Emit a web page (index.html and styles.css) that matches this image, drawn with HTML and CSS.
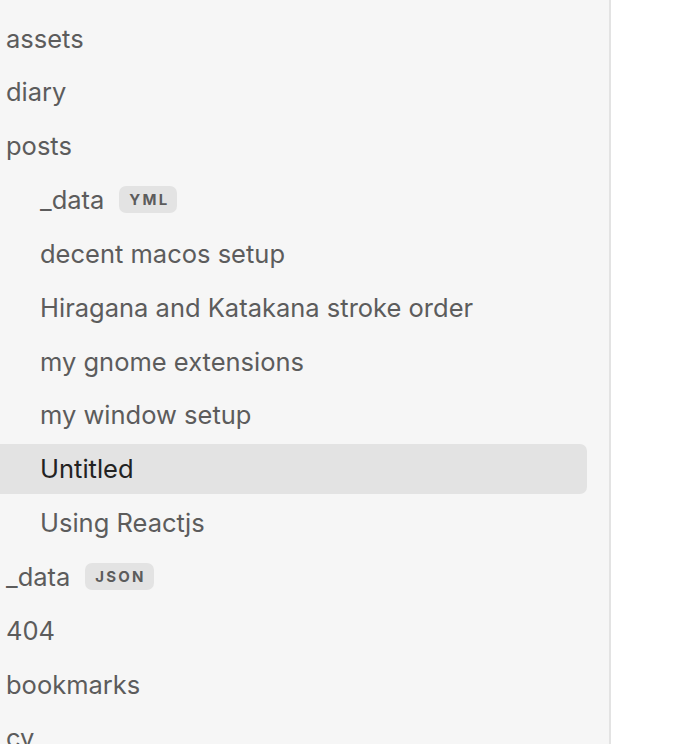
FILE: index.html
```html
<!DOCTYPE html>
<html lang="en">
<head>
<meta charset="utf-8">
<title>Files</title>
<link rel="stylesheet" href="styles.css">
</head>
<body>
<div class="app">
  <nav class="sidebar">
    <div class="tree">
      <div class="row">assets</div>
      <div class="row">diary</div>
      <div class="row">posts</div>
      <div class="row nested">_data <span class="badge">YML</span></div>
      <div class="row nested">decent macos setup</div>
      <div class="row nested">Hiragana and Katakana stroke order</div>
      <div class="row nested">my gnome extensions</div>
      <div class="row nested">my window setup</div>
      <div class="row nested active">Untitled</div>
      <div class="row nested">Using Reactjs</div>
      <div class="row">_data <span class="badge">JSON</span></div>
      <div class="row">404</div>
      <div class="row">bookmarks</div>
      <div class="row">cv</div>
    </div>
  </nav>
  <main class="content"></main>
</div>
</body>
</html>
```

FILE: styles.css
```css
html, body {
  margin: 0;
  padding: 0;
  height: 100%;
  background: #ffffff;
  overflow: hidden;
}

.app {
  display: flex;
  height: 744px;
}

.sidebar {
  width: 609px;
  flex: none;
  background: #f6f6f6;
  border-right: 2px solid #e3e3e3;
  box-sizing: content-box;
  overflow: hidden;
}

.tree {
  display: flex;
  flex-direction: column;
  gap: 4.33px;
  padding: 13.4px 22px 0 0;
}

.row {
  height: 49.5px;
  display: flex;
  align-items: center;
  padding-left: 6px;
  font-family: "Inter", "Noto Sans", sans-serif;
  font-size: 25.5px;
  color: #5c5c5c;
  border-radius: 0 7px 7px 0;
  white-space: nowrap;
  flex: none;
}

.row.nested {
  padding-left: 40px;
}

.row.active {
  background: #e3e3e3;
  color: #222222;
}

.badge {
  margin-left: 15px;
  height: 27px;
  display: inline-flex;
  align-items: center;
  padding: 0 8px 0 10px;
  border-radius: 7px;
  background: #e3e3e3;
  color: #5c5c5c;
  font-family: "Inter", "Noto Sans", sans-serif;
  font-size: 15px;
  font-weight: 700;
  letter-spacing: 2.2px;
}

.content {
  flex: 1;
  background: #ffffff;
}
```
